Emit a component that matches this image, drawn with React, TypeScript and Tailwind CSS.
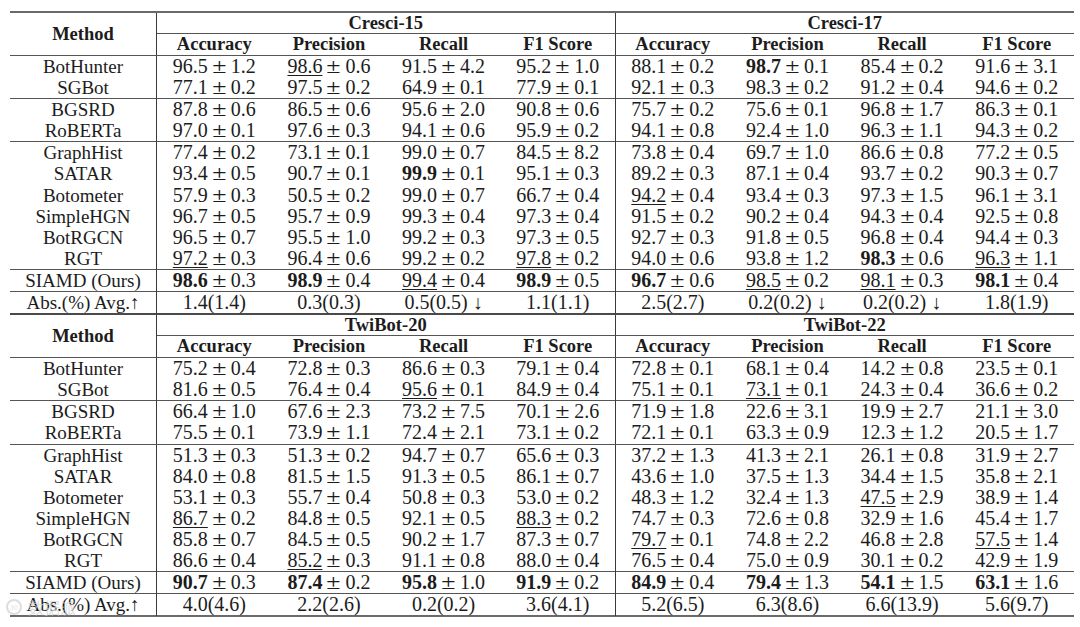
import clsx from "clsx";

// prefix "b:" = bold mean, "u:" = underlined mean (second best)
const top = {
  names: ["Cresci-15", "Cresci-17"],
  groups: [
    [
      ["BotHunter", "96.5±1.2", "u:98.6±0.6", "91.5±4.2", "95.2±1.0", "88.1±0.2", "b:98.7±0.1", "85.4±0.2", "91.6±3.1"],
      ["SGBot", "77.1±0.2", "97.5±0.2", "64.9±0.1", "77.9±0.1", "92.1±0.3", "98.3±0.2", "91.2±0.4", "94.6±0.2"],
    ],
    [
      ["BGSRD", "87.8±0.6", "86.5±0.6", "95.6±2.0", "90.8±0.6", "75.7±0.2", "75.6±0.1", "96.8±1.7", "86.3±0.1"],
      ["RoBERTa", "97.0±0.1", "97.6±0.3", "94.1±0.6", "95.9±0.2", "94.1±0.8", "92.4±1.0", "96.3±1.1", "94.3±0.2"],
    ],
    [
      ["GraphHist", "77.4±0.2", "73.1±0.1", "99.0±0.7", "84.5±8.2", "73.8±0.4", "69.7±1.0", "86.6±0.8", "77.2±0.5"],
      ["SATAR", "93.4±0.5", "90.7±0.1", "b:99.9±0.1", "95.1±0.3", "89.2±0.3", "87.1±0.4", "93.7±0.2", "90.3±0.7"],
      ["Botometer", "57.9±0.3", "50.5±0.2", "99.0±0.7", "66.7±0.4", "u:94.2±0.4", "93.4±0.3", "97.3±1.5", "96.1±3.1"],
      ["SimpleHGN", "96.7±0.5", "95.7±0.9", "99.3±0.4", "97.3±0.4", "91.5±0.2", "90.2±0.4", "94.3±0.4", "92.5±0.8"],
      ["BotRGCN", "96.5±0.7", "95.5±1.0", "99.2±0.3", "97.3±0.5", "92.7±0.3", "91.8±0.5", "96.8±0.4", "94.4±0.3"],
      ["RGT", "u:97.2±0.3", "96.4±0.6", "99.2±0.2", "u:97.8±0.2", "94.0±0.6", "93.8±1.2", "b:98.3±0.6", "u:96.3±1.1"],
    ],
    [["SIAMD (Ours)", "b:98.6±0.3", "b:98.9±0.4", "u:99.4±0.4", "b:98.9±0.5", "b:96.7±0.6", "u:98.5±0.2", "u:98.1±0.3", "b:98.1±0.4"]],
    [["Abs.(%) Avg.↑", "1.4(1.4)", "0.3(0.3)", "0.5(0.5) ↓", "1.1(1.1)", "2.5(2.7)", "0.2(0.2) ↓", "0.2(0.2) ↓", "1.8(1.9)"]],
  ],
};

const bottom = {
  names: ["TwiBot-20", "TwiBot-22"],
  groups: [
    [
      ["BotHunter", "75.2±0.4", "72.8±0.3", "86.6±0.3", "79.1±0.4", "72.8±0.1", "68.1±0.4", "14.2±0.8", "23.5±0.1"],
      ["SGBot", "81.6±0.5", "76.4±0.4", "u:95.6±0.1", "84.9±0.4", "75.1±0.1", "u:73.1±0.1", "24.3±0.4", "36.6±0.2"],
    ],
    [
      ["BGSRD", "66.4±1.0", "67.6±2.3", "73.2±7.5", "70.1±2.6", "71.9±1.8", "22.6±3.1", "19.9±2.7", "21.1±3.0"],
      ["RoBERTa", "75.5±0.1", "73.9±1.1", "72.4±2.1", "73.1±0.2", "72.1±0.1", "63.3±0.9", "12.3±1.2", "20.5±1.7"],
    ],
    [
      ["GraphHist", "51.3±0.3", "51.3±0.2", "94.7±0.7", "65.6±0.3", "37.2±1.3", "41.3±2.1", "26.1±0.8", "31.9±2.7"],
      ["SATAR", "84.0±0.8", "81.5±1.5", "91.3±0.5", "86.1±0.7", "43.6±1.0", "37.5±1.3", "34.4±1.5", "35.8±2.1"],
      ["Botometer", "53.1±0.3", "55.7±0.4", "50.8±0.3", "53.0±0.2", "48.3±1.2", "32.4±1.3", "u:47.5±2.9", "38.9±1.4"],
      ["SimpleHGN", "u:86.7±0.2", "84.8±0.5", "92.1±0.5", "u:88.3±0.2", "74.7±0.3", "72.6±0.8", "32.9±1.6", "45.4±1.7"],
      ["BotRGCN", "85.8±0.7", "84.5±0.5", "90.2±1.7", "87.3±0.7", "u:79.7±0.1", "74.8±2.2", "46.8±2.8", "u:57.5±1.4"],
      ["RGT", "86.6±0.4", "u:85.2±0.3", "91.1±0.8", "88.0±0.4", "76.5±0.4", "75.0±0.9", "30.1±0.2", "42.9±1.9"],
    ],
    [["SIAMD (Ours)", "b:90.7±0.3", "b:87.4±0.2", "b:95.8±1.0", "b:91.9±0.2", "b:84.9±0.4", "b:79.4±1.3", "b:54.1±1.5", "b:63.1±1.6"]],
    [["Abs.(%) Avg.↑", "4.0(4.6)", "2.2(2.6)", "0.2(0.2)", "3.6(4.1)", "5.2(6.5)", "6.3(8.6)", "6.6(13.9)", "5.6(9.7)"]],
  ],
};

const metrics = ["Accuracy", "Precision", "Recall", "F1 Score"];

function Value({ v }: { v: string }) {
  const bold = v.startsWith("b:");
  const under = v.startsWith("u:");
  const text = bold || under ? v.slice(2) : v;
  if (!text.includes("±")) return <span className="whitespace-nowrap">{text}</span>;
  const [mean, sd] = text.split("±");
  return (
    <span className="whitespace-nowrap">
      <span
        className={clsx(
          bold && "font-bold",
          under && "underline decoration-[1px] underline-offset-[2px]"
        )}
      >
        {mean}
      </span>
      <span className="mx-[6px] inline-block scale-x-[1.3]">±</span>
      <span>{sd}</span>
    </span>
  );
}

function Section({ data, first }: { data: typeof top; first?: boolean }) {
  return (
    <div className={clsx("border-t-2", first ? "border-[#6a6a6a]" : "border-[#4a4a4a]")}>
      <div className="grid grid-cols-[147px_1fr_1fr] grid-rows-[21px_21px]">
        <div className="row-span-2 flex items-center justify-center border-r border-[#3a3a3a] text-[18.5px] font-bold">
          Method
        </div>
        {data.names.map((n, i) => (
          <div
            key={n}
            className={clsx(
              "flex items-center justify-center border-b border-[#555] text-[18.5px] font-bold",
              i === 0 && "border-r border-r-[#3a3a3a]"
            )}
          >
            {n}
          </div>
        ))}
        <div className="col-span-2 grid grid-cols-8">
          {[...metrics, ...metrics].map((m, i) => (
            <div
              key={i}
              className={clsx(
                "flex items-center justify-center text-[18.5px] font-bold",
                i === 3 && "border-r border-[#3a3a3a]"
              )}
            >
              {m}
            </div>
          ))}
        </div>
      </div>
      {data.groups.map((g, gi) => (
        <div key={gi} className="border-t border-[#555]">
          {g.map((row) => (
            <div key={row[0]} className="grid h-[21.1px] grid-cols-[147px_repeat(8,1fr)]">
              <div className="flex items-center justify-center whitespace-nowrap border-r border-[#3a3a3a] pb-[1px] text-[19px]">
                {row[0]}
              </div>
              {row.slice(1).map((v, i) => (
                <div
                  key={i}
                  className={clsx(
                    "flex items-center justify-center pb-[2px] text-[20px]",
                    i === 3 && "border-r border-[#3a3a3a]"
                  )}
                >
                  <Value v={v} />
                </div>
              ))}
            </div>
          ))}
        </div>
      ))}
    </div>
  );
}

export default function App() {
  return (
    <div className="relative h-[627px] w-[1080px] overflow-hidden bg-white font-['Liberation_Serif',serif] text-[#1c1c1c]">
      <div className="ml-[10px] mt-[11px] w-[1064px] border-b-2 border-[#6a6a6a] leading-none">
        <Section data={top} first />
        <Section data={bottom} />
      </div>
      {/* faint watermark lying over the last row */}
      <div className="pointer-events-none absolute left-[6px] top-[599px] flex items-center gap-[6px] font-['Noto_Sans_CJK_SC',sans-serif] text-[16px] leading-none text-[#d4d4d4] opacity-70">
        <span className="flex h-[16px] w-[16px] items-center justify-center rounded-full border-2 border-[#d0d0d0] text-[7px]">
          30
        </span>
        <span>数据派</span>
      </div>
    </div>
  );
}
